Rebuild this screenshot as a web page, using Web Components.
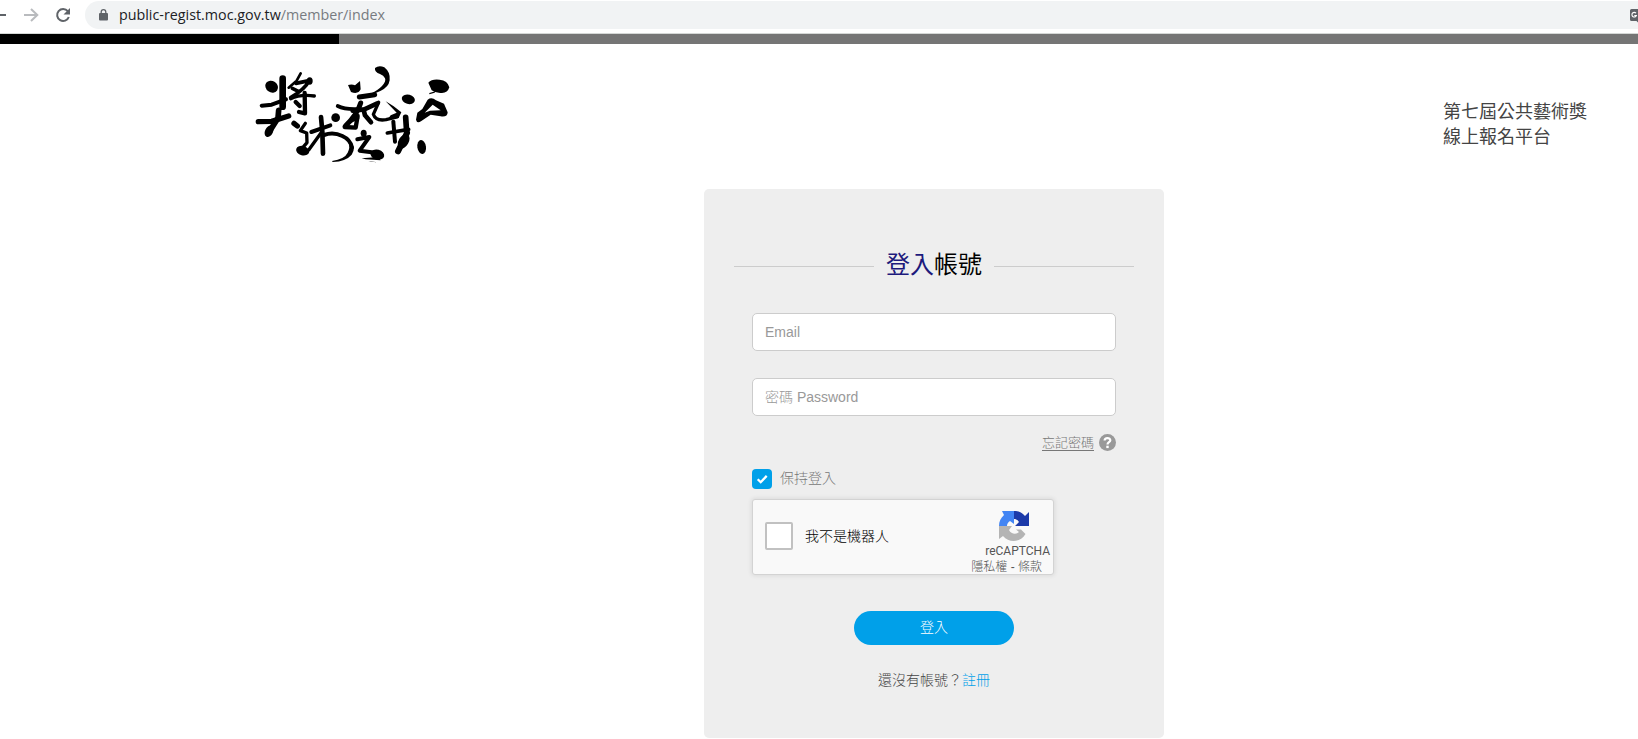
<!DOCTYPE html>
<html lang="zh-Hant">
<head>
<meta charset="utf-8">
<title>public-regist.moc.gov.tw</title>
<style>
body {
    margin: 0;
    height: 739px;
    overflow: hidden;
    background: #fff;
    font-family: "Liberation Sans", "Noto Sans CJK TC", sans-serif;
}
</style>
</head>
<body>
<browser-bar host="public-regist.moc.gov.tw" path="/member/index"></browser-bar>
<load-progress></load-progress>
<site-header>
    <brush-logo slot="logo"></brush-logo>
    <div>第七屆公共藝術獎</div>
    <div>線上報名平台</div>
</site-header>
<login-card>
    <card-title slot="title"><span slot="first">登入</span>帳號</card-title>
    <text-field placeholder="Email"></text-field>
    <text-field placeholder="密碼 Password"></text-field>
    <forgot-link>忘記密碼</forgot-link>
    <check-option>保持登入</check-option>
    <captcha-box>我不是機器人</captcha-box>
    <login-button>登入</login-button>
    <sign-up><span>還沒有帳號？</span><a slot="link">註冊</a></sign-up>
</login-card>

<script>
function define(name, html, setup) {
    const template = document.createElement('template');
    template.innerHTML = html;
    customElements.define(name, class extends HTMLElement {
        constructor() {
            super();
            this.attachShadow({ mode: 'open' });
            this.shadowRoot.appendChild(template.content.cloneNode(true));
        }
        connectedCallback() {
            if (setup) setup(this, this.shadowRoot);
        }
    });
}

define('browser-bar', `
<style>
:host {
    display: flex;
    align-items: flex-start;
    height: 34px;
    box-sizing: border-box;
    border-bottom: 1px solid #d5d8d6;
    font: 14.3px "Open Sans", sans-serif;
    overflow: hidden;
}
.nav { width: 85px; height: 30px; flex: none; }
.address {
    flex: 1;
    display: flex;
    align-items: center;
    height: 28px;
    margin-top: 1px;
    padding-left: 14px;
    border-radius: 14px 0 0 14px;
    background: #f1f3f4;
    color: #202124;
    white-space: pre;
}
.lock { width: 9px; height: 12px; margin-right: 11px; }
.url { line-height: 28px; height: 28px; }
.path { color: #777b80; }
.translate { margin-left: auto; width: 8px; height: 15px; }
</style>
<svg class="nav" viewBox="0 0 85 30" fill="none">
    <path d="M0 15h6" stroke="#5f6368" stroke-width="2"/>
    <path d="M24 15h13M31 9l6.3 6-6.3 6" stroke="#b9bbbe" stroke-width="2"/>
    <path d="M67.8 11.2A6 6 0 1 0 68.8 17" stroke="#5f6368" stroke-width="2"/>
    <path d="M70 8v6.5h-6.5z" fill="#5f6368"/>
</svg>
<div class="address">
    <svg class="lock" viewBox="0 0 9 12"><rect y="4" width="9" height="7.6" rx="1" fill="#5f6368"/><path d="M2.2 4.5V3a2.3 2.3 0 0 1 4.6 0v1.5" fill="none" stroke="#5f6368" stroke-width="1.3"/></svg>
    <div class="url"><span class="host"></span><span class="path"></span></div>
    <svg class="translate" viewBox="0 0 8 15"><path d="M1.5 1H8v13.5L6.5 13h-5A1.5 1.5 0 0 1 0 11.5v-9A1.5 1.5 0 0 1 1.5 1z" fill="#5f6368"/><path d="M6 5.2a2.3 2.3 0 1 0 .4 2.3H4.300" fill="none" stroke="#fff" stroke-width="1.1"/></svg>
</div>
`, (el, root) => {
    root.querySelector('.host').textContent = el.getAttribute('host');
    root.querySelector('.path').textContent = el.getAttribute('path');
});

define('load-progress', `
<style>
:host { display: block; height: 10px; background: #757575; }
div { width: 339px; height: 10px; background: #000; }
</style>
<div></div>
`);

define('site-header', `
<style>
:host {
    display: flex;
    justify-content: space-between;
    align-items: flex-start;
    height: 145px;
    box-sizing: border-box;
    padding: 16px 51px 0 250px;
}
.name {
    margin-top: 40px;
    color: #444;
    font-size: 18px;
    line-height: 25px;
}
</style>
<slot name="logo"></slot>
<div class="name"><slot></slot></div>
`);

// brush artwork, laid out on a grid of three units to the pixel
define('brush-logo', `
<style>
:host { display: block; width: 205px; height: 110px; }
svg { display: block; }
</style>
<svg width="205" height="110" viewBox="0 0 615 330" fill="#000">
    <g fill="none" stroke="#000" stroke-linecap="round" stroke-linejoin="round">
        <path d="M98 56L98 140" stroke-width="20"/>
        <path d="M35 137L65 134L108 118" stroke-width="12"/>
        <path d="M152 40L140 62L116 83" stroke-width="8"/>
        <path d="M138 70L177 62Q166 86 122 113" stroke-width="11"/>
        <path d="M127 85L145 94" stroke-width="11"/>
        <path d="M122 116Q152 102 193 108" stroke-width="10"/>
        <path d="M164 99L165 160L147 156" stroke-width="13"/>
        <path d="M137 126L149 138" stroke-width="13"/>
        <path d="M86 151L84 174L56 218" stroke-width="17"/>
        <path d="M25 185L65 184L116 168" stroke-width="16"/>
        <path d="M132 190L142 198" stroke-width="16"/>
        <path d="M166 190L151 212L170 219L171 248L151 271" stroke-width="10"/>
        <path d="M213 171L217 215L219 281" stroke-width="14"/>
        <path d="M184 216L241 196" stroke-width="12"/>
        <path d="M215 216Q199 238 176 270" stroke-width="10"/>
        <path d="M222 225Q250 215 277 228Q301 239 306 262" stroke-width="12"/>
        <path d="M263 138Q285 149 324 147" stroke-width="11"/>
        <path d="M328 111L374 104" stroke-width="15"/>
        <path d="M308 152L343 148L382 130" stroke-width="14"/>
        <path d="M332 129Q322 164 286 198" stroke-width="15"/>
        <path d="M284 201L317 203L323 168" stroke-width="13"/>
        <path d="M305 181L322 174" stroke-width="12"/>
        <path d="M341 150L345 166L363 187" stroke-width="14"/>
        <path d="M386 127L370 163Q377 184 408 179L442 171" stroke-width="10"/>
        <path d="M322 238L358 231L329 272L383 279" stroke-width="12"/>
        <path d="M430 185L435 245" stroke-width="12"/>
        <path d="M412 219L476 208" stroke-width="11"/>
        <path d="M467 172L470 217" stroke-width="17"/>
        <path d="M471 219L444 274" stroke-width="18"/>
    </g>
    <ellipse cx="65" cy="80" rx="20" ry="17" transform="rotate(35 65 80)"/>
    <ellipse cx="179" cy="63" rx="9" ry="11"/>
    <ellipse cx="57" cy="214" rx="12" ry="18" transform="rotate(25 57 214)"/>
    <ellipse cx="158" cy="272" rx="20" ry="14" transform="rotate(15 158 272)"/>
    <path d="M300 244Q320 262 305 284Q288 304 248 306L246 303Q284 297 293 278Q301 263 296 250z"/>
    <ellipse cx="257" cy="173" rx="13" ry="13"/>
    <path d="M294 75Q306 71 315 76L330 63L332 88Q325 104 303 96z"/>
    <path d="M375 24Q387 14 403 22Q422 37 419 61Q416 82 391 93Q377 101 359 103Q385 90 396 78Q409 64 405 55Q401 46 390 42Q373 36 375 24z"/>
    <path d="M407 124L431 139L454 157L446 174L426 171L409 184L422 166L440 158z"/>
    <ellipse cx="341" cy="220" rx="9" ry="11"/>
    <ellipse cx="382" cy="284" rx="21" ry="15" transform="rotate(15 382 284)"/>
    <path d="M335 295L385 291L392 301L347 298zM355 303L381 307L363 305z"/>
    <ellipse cx="475" cy="118" rx="20" ry="14" transform="rotate(15 475 118)"/>
    <ellipse cx="461" cy="244" rx="15" ry="24" transform="rotate(30 461 244)"/>
    <ellipse cx="515" cy="261" rx="13" ry="21" transform="rotate(-8 515 261)"/>
    <path d="M535 68Q545 56 569 59Q593 61 598 82Q593 99 576 99Q559 101 545 91zM538 99L556 94L554 98L538 103z"/>
    <path fill-rule="evenodd" d="M533 119Q545 110 558 121L582 131L593 157Q593 172 572 169L542 164L513 184Q501 192 498 179L502 158L517 147zM548 134L524 158L540 152L572 151z"/>
</svg>
`);

define('login-card', `
<style>
:host {
    display: block;
    width: 460px;
    height: 549px;
    box-sizing: border-box;
    margin-left: 704px;
    padding-top: 62px;
    border-radius: 5px;
    background: #eee;
}
.fields {
    display: flex;
    flex-direction: column;
    align-items: flex-start;
    margin: 31px 48px 0;
}
</style>
<slot name="title"></slot>
<div class="fields"><slot></slot></div>
`);

define('card-title', `
<style>
:host {
    display: flex;
    align-items: center;
    gap: 12px;
    height: 31px;
    margin: 0 30px;
    color: #000;
    font-size: 24px;
    line-height: 27px;
    white-space: nowrap;
}
:host::before, :host::after {
    content: "";
    flex: 1;
    height: 1px;
    background: #ccc;
}
.text { height: 31px; }
.first { color: #1d1a7c; }
</style>
<div class="text"><span class="first"><slot name="first"></slot></span><slot></slot></div>
`);

define('text-field', `
<style>
:host { display: block; width: 364px; height: 38px; margin-bottom: 27px; }
input {
    display: block;
    width: 100%;
    height: 38px;
    box-sizing: border-box;
    padding: 0 12px;
    border: 1px solid #ccc;
    border-radius: 5px;
    background: #fff;
    font: 300 14px "Liberation Sans", "Noto Sans CJK TC", sans-serif;
}
input::placeholder { color: #999; opacity: 1; }
</style>
<input>
`, (el, root) => {
    root.querySelector('input').placeholder = el.getAttribute('placeholder');
});

define('forgot-link', `
<style>
:host {
    display: flex;
    align-items: center;
    align-self: flex-end;
    gap: 5px;
    height: 18px;
    margin-top: -10px;
    margin-bottom: 1px;
    color: #777;
    font-size: 13px;
    font-weight: 300;
    line-height: 18px;
}
a { border-bottom: 1px solid #777; height: 15px; line-height: 16px; margin-top: 1px; }
</style>
<a><slot></slot></a>
<svg width="17" height="17" viewBox="0 0 17 17"><circle cx="8.5" cy="8.5" r="8.5" fill="#999"/><path d="M5.6 6.500C5.700 3.200 11.400 3.200 11.300 6.500C11.200 8.300 8.500 8.200 8.500 10.400" fill="none" stroke="#fff" stroke-width="2.2"/><rect x="7.3" y="11.7" width="2.4" height="2.4" fill="#fff"/></svg>
`);

define('check-option', `
<style>
:host {
    display: flex;
    align-items: flex-start;
    gap: 8px;
    height: 20px;
    margin-top: 17px;
    color: #777;
    font-size: 14px;
    font-weight: 300;
    line-height: 18px;
}
</style>
<svg width="20" height="20" viewBox="0 0 20 20"><rect width="20" height="20" rx="4" fill="#00a0e9"/><path d="M5.700 10.200l3 3 6-6.300" fill="none" stroke="#fff" stroke-width="2.3"/></svg>
<span><slot></slot></span>
`);

define('captcha-box', `
<style>
:host {
    display: flex;
    width: 302px;
    height: 76px;
    box-sizing: border-box;
    margin-top: 10px;
    border: 1px solid #d3d3d3;
    border-radius: 3px;
    background: #f9f9f9;
    box-shadow: 0 0 4px 1px rgba(0, 0, 0, .08);
    overflow: hidden;
}
.box {
    width: 28px;
    height: 28px;
    box-sizing: border-box;
    margin: 22px 12px 0;
    border: 2px solid #c1c1c1;
    border-radius: 2px;
    background: #fff;
}
.label {
    flex: 1;
    color: #000;
    font-size: 14px;
    font-weight: 300;
    line-height: 72px;
}
.brand {
    display: flex;
    flex-direction: column;
    align-items: flex-end;
    width: 90px;
    color: #555;
    white-space: nowrap;
}
.brand svg { margin: 10px 23px 0 0; flex: none; }
.re { margin: 1px 3px 0 0; font: 12px/16px Roboto, sans-serif; }
.terms { margin: 1px 11px 0 0; font: 300 12px/15px "Liberation Sans", "Noto Sans CJK TC", sans-serif; }
</style>
<div class="box"></div>
<div class="label"><slot></slot></div>
<div class="brand">
    <svg width="32" height="32" viewBox="0 0 32 32">
        <path d="M31 2v14H17l4-4c-1.300-2-3-3-5-3V1c4.500 0 8 1.600 11 5z" fill="#1c3aa9"/>
        <path d="M4 1h12v13l-4-3c-2 1.300-3 3-3 5H1c0-4.500 1.600-7.700 5-11z" fill="#4285f4"/>
        <path d="M1 29V16h13l-3 4c2.200 4.300 7 5 10 2l-3-2.500h5l4.500 4.500C22 33 11 33 5 26z" fill="#b4b4b4"/>
    </svg>
    <div class="re">reCAPTCHA</div>
    <div class="terms">隱私權 - 條款</div>
</div>
`);

define('login-button', `
<style>
:host { display: block; align-self: center; margin-top: 36px; }
button {
    display: block;
    width: 160px;
    height: 34px;
    padding: 0 0 2px;
    border: 0;
    border-radius: 17px;
    background: #00a0e9;
    color: #fff;
    font: 300 14px/32px "Liberation Sans", "Noto Sans CJK TC", sans-serif;
}
</style>
<button><slot></slot></button>
`);

define('sign-up', `
<style>
:host {
    display: flex;
    align-self: center;
    margin-top: 25px;
    color: #444;
    font-size: 14px;
    font-weight: 300;
    line-height: 20px;
}
.link { color: #00a0e9; }
</style>
<slot></slot><span class="link"><slot name="link"></slot></span>
`);
</script>
</body>
</html>
